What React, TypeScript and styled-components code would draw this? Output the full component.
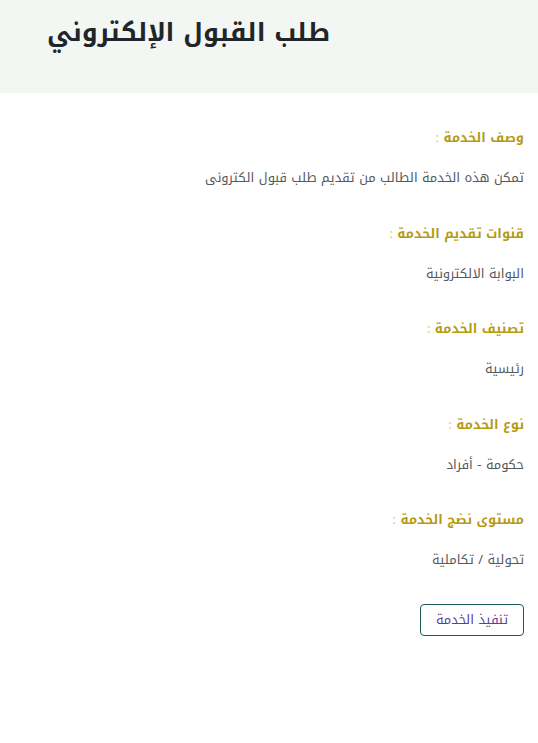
import styled, { createGlobalStyle } from "styled-components";

const GlobalStyle = createGlobalStyle`
	body {
		margin: 0;
		background: #fff;
		font-family: "Noto Kufi Arabic", "DejaVu Sans", sans-serif;
	}
`;

const Header = styled.header`
	display: flex;
	justify-content: flex-start;
	height: 93px;
	padding: 8px 0 0 47px;
	box-sizing: border-box;
	background: #f3f7f4;
`;

const Title = styled.h1`
	margin: 0;
	font-size: 25.5px;
	font-weight: 700;
	color: #212529;
	direction: rtl;
`;

const Content = styled.main`
	direction: rtl;
	display: flex;
	flex-direction: column;
	align-items: flex-start;
	padding: 33px 14px 0 14px;
`;

const Item = styled.section`
	margin-bottom: 31.5px;
`;

const Label = styled.div`
	font-size: 13px;
	font-weight: 700;
	color: #b59b12;
	line-height: 24px;
	margin-bottom: 16px;

	& > span {
		font-weight: 400;
		color: #d8c878;
	}
`;

const Value = styled.div`
	font-size: 13px;
	color: #555a60;
	line-height: 24px;
`;

const Button = styled.button`
	margin-top: 0;
	padding: 0 15px;
	height: 32px;
	border: 1px solid #1f5c5a;
	border-radius: 4px;
	background: #fff;
	color: #5b3f9a;
	font-family: inherit;
	font-size: 13px;
	cursor: pointer;
`;

const items = [
	{ label: "وصف الخدمة", value: "تمكن هذه الخدمة الطالب من تقديم طلب قبول الكترونى" },
	{ label: "قنوات تقديم الخدمة", value: "البوابة الالكترونية" },
	{ label: "تصنيف الخدمة", value: "رئيسية" },
	{ label: "نوع الخدمة", value: "حكومة - أفراد" },
	{ label: "مستوى نضج الخدمة", value: "تحولية / تكاملية" },
];

export default function App() {
	return (
		<>
			<GlobalStyle />
			<Header>
				<Title>طلب القبول الإلكتروني</Title>
			</Header>
			<Content>
				{items.map(v => (
					<Item key={v.label}>
						<Label>{v.label} <span>:</span></Label>
						<Value>{v.value}</Value>
					</Item>
				))}
				<Button>تنفيذ الخدمة</Button>
			</Content>
		</>
	);
}
